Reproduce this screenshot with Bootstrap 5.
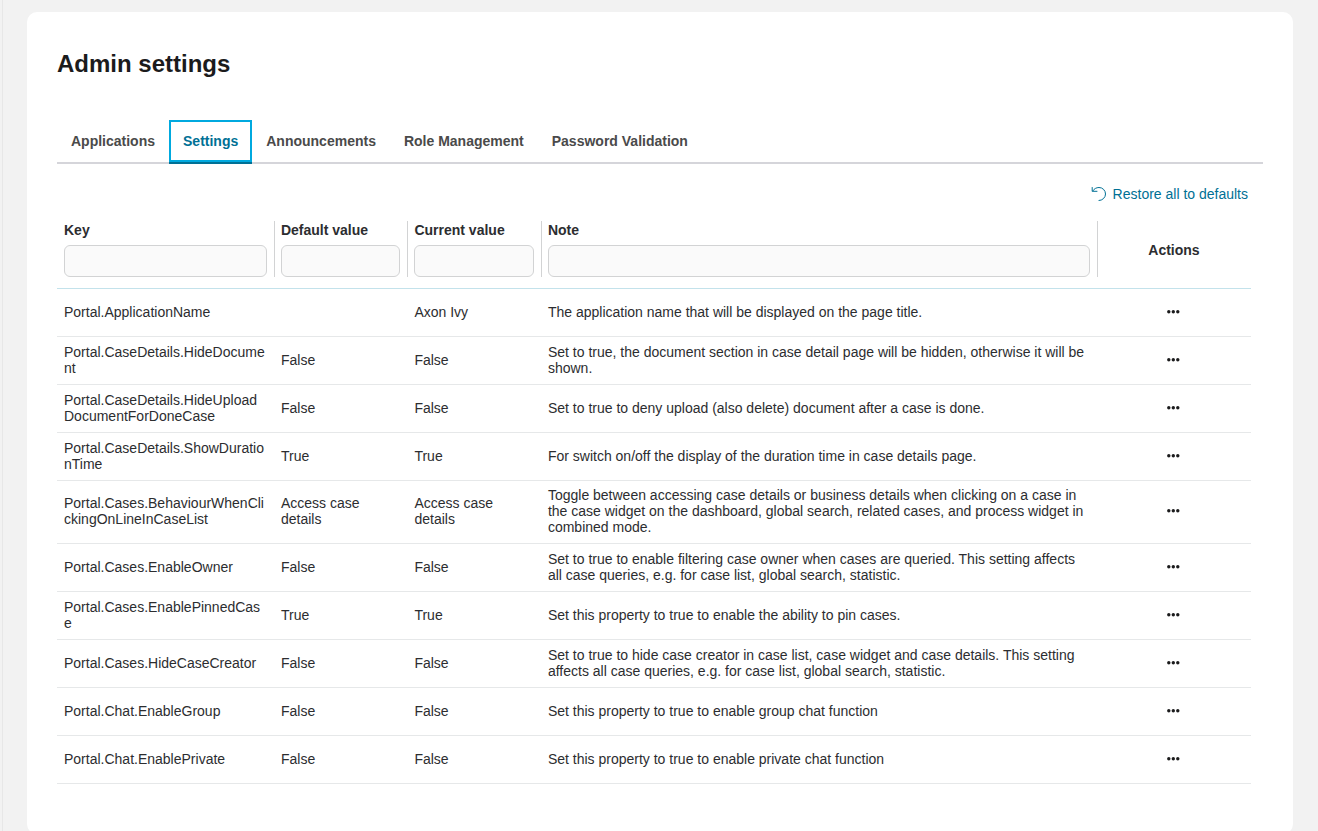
<!DOCTYPE html>
<html lang="en">
<head>
<meta charset="utf-8">
<meta name="viewport" content="width=device-width, initial-scale=1">
<title>Admin settings</title>
<link href="https://cdn.jsdelivr.net/npm/bootstrap@5.3.0/dist/css/bootstrap.min.css" rel="stylesheet">
<style>
  body { font-family: "Liberation Sans", Arial, sans-serif; font-size: 14px; line-height: 16px; color: #2c2d30; background: #f2f2f2; }
  .page-shell { margin-left: 2px; border-left: 1px solid #e7e7e7; padding: 12px 25px 0 24px; }
  .settings-panel { background: #fff; border-radius: 10px; padding: 36px 30px 50px; }
  .page-title { font-size: 24px; line-height: 32px; font-weight: 700; color: #1b1b1c; margin-bottom: 40px; }
  .admin-tabs { border-bottom: 2px solid #d5d5da; }
  .admin-tabs .nav-link { padding: 13px 14px; margin-bottom: -2px; background: transparent; border: 0; border-bottom: 2px solid transparent; border-radius: 0; font-weight: 700; color: #4a4a4a; }
  .admin-tabs .nav-link.active { color: #007095; border-bottom-color: #007095; box-shadow: inset 0 0 0 2px #00a9df; }
  .table-tools { padding-top: 15px; }
  .restore-link { color: #007095; font-size: 14px; line-height: 16px; padding: 7px 15px; gap: 6px; border: 0; }
  .table-area { margin-right: 12px; padding-top: 12px; }
  .settings-table { table-layout: fixed; color: inherit; border-collapse: separate; border-spacing: 0; }
  .settings-table .key-col { width: 18.17%; }
  .settings-table .value-col { width: 11.18%; }
  .settings-table .action-col { width: 12.9%; }
  .settings-table thead th { padding: 0 0 11px; border-bottom: 1px solid #c3e2eb; }
  .settings-table td { height: 48px; padding: 6px 7px 8px; border-bottom: 1px solid #e6e8e9; vertical-align: middle; overflow-wrap: anywhere; }
  .settings-table td:first-child { padding-right: 9px; }
  .head-cell { height: 56px; padding: 1px 7px 0 6px; border-left: 1px solid #d2d3d4; }
  th:first-child .head-cell { padding-left: 7px; border-left: 0; }
  .head-cell .form-control { height: 32px; margin-top: 7px; padding: 6px 8px; font-size: 14px; line-height: 16px; background: #fafafa; border: 1px solid #d2d3d4; border-radius: 6px; }
  .more-btn { width: 32px; height: 32px; padding: 0; border: 0; color: #1b1b1c; }
</style>
</head>
<body>
<div class="vh-100 overflow-hidden">
<main class="page-shell">
  <section class="settings-panel">
    <h1 class="page-title">Admin settings</h1>
    <ul class="nav admin-tabs" role="tablist">
      <li class="nav-item" role="presentation"><button class="nav-link" type="button" role="tab" aria-selected="false">Applications</button></li>
      <li class="nav-item" role="presentation"><button class="nav-link active" type="button" role="tab" aria-selected="true">Settings</button></li>
      <li class="nav-item" role="presentation"><button class="nav-link" type="button" role="tab" aria-selected="false">Announcements</button></li>
      <li class="nav-item" role="presentation"><button class="nav-link" type="button" role="tab" aria-selected="false">Role Management</button></li>
      <li class="nav-item" role="presentation"><button class="nav-link" type="button" role="tab" aria-selected="false">Password Validation</button></li>
    </ul>
    <div class="table-tools d-flex justify-content-end">
      <button class="btn restore-link d-inline-flex align-items-center" type="button">
        <svg width="16" height="16" viewBox="0 0 16 16" fill="none" stroke="currentColor" stroke-width="1" stroke-linecap="round" stroke-linejoin="round" aria-hidden="true"><path d="M1.200 1.500v3.800h4.800M1.800 4.900C3 2.800 5.400 1.500 8 1.500a6.500 6.500 0 1 1 0 13"/></svg>
        Restore all to defaults
      </button>
    </div>
    <div class="table-area">
      <table class="table settings-table mb-0">
        <colgroup><col class="key-col"><col class="value-col"><col class="value-col"><col><col class="action-col"></colgroup>
        <thead>
          <tr>
            <th scope="col"><div class="head-cell"><label class="d-block" for="f-key">Key</label><input class="form-control" id="f-key" type="text"></div></th>
            <th scope="col"><div class="head-cell"><label class="d-block" for="f-default">Default value</label><input class="form-control" id="f-default" type="text"></div></th>
            <th scope="col"><div class="head-cell"><label class="d-block" for="f-current">Current value</label><input class="form-control" id="f-current" type="text"></div></th>
            <th scope="col"><div class="head-cell"><label class="d-block" for="f-note">Note</label><input class="form-control" id="f-note" type="text"></div></th>
            <th scope="col"><div class="head-cell d-flex align-items-center justify-content-center">Actions</div></th>
          </tr>
        </thead>
        <tbody>
          <tr><td>Portal.ApplicationName</td><td></td><td>Axon Ivy</td><td>The application name that will be displayed on the page title.</td><td class="more"></td></tr>
          <tr><td>Portal.CaseDetails.HideDocument</td><td>False</td><td>False</td><td>Set to true, the document section in case detail page will be hidden, otherwise it will be shown.</td><td class="more"></td></tr>
          <tr><td>Portal.CaseDetails.HideUploadDocumentForDoneCase</td><td>False</td><td>False</td><td>Set to true to deny upload (also delete) document after a case is done.</td><td class="more"></td></tr>
          <tr><td>Portal.CaseDetails.ShowDurationTime</td><td>True</td><td>True</td><td>For switch on/off the display of the duration time in case details page.</td><td class="more"></td></tr>
          <tr><td>Portal.Cases.BehaviourWhenClickingOnLineInCaseList</td><td>Access case details</td><td>Access case details</td><td>Toggle between accessing case details or business details when clicking on a case in the case widget on the dashboard, global search, related cases, and process widget in combined mode.</td><td class="more"></td></tr>
          <tr><td>Portal.Cases.EnableOwner</td><td>False</td><td>False</td><td>Set to true to enable filtering case owner when cases are queried. This setting affects all case queries, e.g. for case list, global search, statistic.</td><td class="more"></td></tr>
          <tr><td>Portal.Cases.EnablePinnedCase</td><td>True</td><td>True</td><td>Set this property to true to enable the ability to pin cases.</td><td class="more"></td></tr>
          <tr><td>Portal.Cases.HideCaseCreator</td><td>False</td><td>False</td><td>Set to true to hide case creator in case list, case widget and case details. This setting affects all case queries, e.g. for case list, global search, statistic.</td><td class="more"></td></tr>
          <tr><td>Portal.Chat.EnableGroup</td><td>False</td><td>False</td><td>Set this property to true to enable group chat function</td><td class="more"></td></tr>
          <tr><td>Portal.Chat.EnablePrivate</td><td>False</td><td>False</td><td>Set this property to true to enable private chat function</td><td class="more"></td></tr>
        </tbody>
      </table>
    </div>
  </section>
</main>
</div>
<template id="more-actions">
  <button class="btn more-btn d-flex align-items-center justify-content-center mx-auto" type="button" aria-label="More actions">
    <svg width="14" height="6" viewBox="0 0 14 6" fill="currentColor" aria-hidden="true"><circle cx="1.800" cy="2.700" r="1.700"/><circle cx="6.300" cy="2.700" r="1.700"/><circle cx="10.800" cy="2.700" r="1.700"/></svg>
  </button>
</template>
<script src="https://cdn.jsdelivr.net/npm/bootstrap@5.3.0/dist/js/bootstrap.bundle.min.js"></script>
<script>
  const moreActions = document.getElementById('more-actions');
  document.querySelectorAll('td.more').forEach(cell => cell.append(moreActions.content.cloneNode(true)));
</script>
</body>
</html>
